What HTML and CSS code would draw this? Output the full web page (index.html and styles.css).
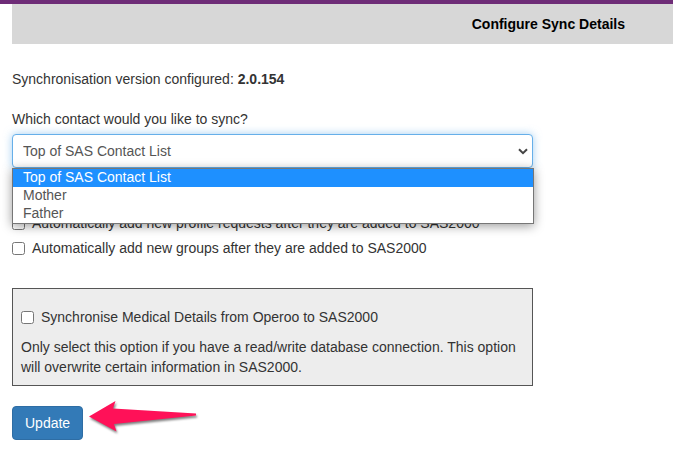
FILE: index.html
```
<!DOCTYPE html>
<html lang="en">
<head>
<meta charset="utf-8">
<meta name="viewport" content="width=device-width, initial-scale=1">
<title>Configure Sync Details</title>
<link rel="stylesheet" href="styles.css">
</head>
<body>
<main class="page">
  <h1 class="title">Configure Sync Details</h1>
  <form class="form">
    <p class="version">Synchronisation version configured: <strong>2.0.154</strong></p>
    <label class="field-label" for="contact">Which contact would you like to sync?</label>
    <div class="picker">
      <select class="select" id="contact">
        <option selected>Top of SAS Contact List</option>
        <option>Mother</option>
        <option>Father</option>
      </select>
      <svg class="chevron" viewBox="0 0 10 7" aria-hidden="true"><path d="M1 1.2 L5 5.2 L9 1.2"/></svg>
      <ul class="menu" role="listbox" aria-label="Contact">
        <li class="item item-active" role="option" aria-selected="true">Top of SAS Contact List</li>
        <li class="item" role="option">Mother</li>
        <li class="item" role="option">Father</li>
      </ul>
    </div>
    <div class="checks">
      <label class="check"><input class="box" type="checkbox">Automatically add new profile requests after they are added to SAS2000</label>
      <label class="check"><input class="box" type="checkbox">Automatically add new groups after they are added to SAS2000</label>
    </div>
    <section class="panel">
      <label class="check"><input class="box" type="checkbox">Synchronise Medical Details from Operoo to SAS2000</label>
      <p class="note">Only select this option if you have a read/write database connection. This option will overwrite certain information in SAS2000.</p>
    </section>
    <div class="actions">
      <button class="button" type="button">Update</button>
      <svg class="arrow" viewBox="0 0 112 36" aria-hidden="true"><path d="M1 15.5 L27.5 0 L25 7.5 L108 12.5 L108 14.5 L26 23 L28.5 30.5 Z"/></svg>
    </div>
  </form>
</main>
</body>
</html>
```
FILE: styles.css
```
* {
  box-sizing: border-box;
}

body {
  margin: 0;
  border-top: 4px solid #6e2c77;
  background: #fff;
  color: #333;
  font: 14px/20px "Liberation Sans", Arial, sans-serif;
}

.page {
  padding-left: 12px;
}

.title {
  margin: 0;
  padding: 10px 48px 10px 0;
  background: #d7d7d7;
  color: #000;
  font-size: 14px;
  line-height: 20px;
  text-align: right;
}

.form {
  max-width: 521px;
  padding-top: 25px;
}

.version {
  margin: 0 0 20px;
}

.field-label {
  display: block;
  margin-bottom: 5px;
}

.picker {
  position: relative;
}

.select {
  display: block;
  width: 100%;
  height: 34px;
  padding: 6px 10px;
  appearance: none;
  border: 1px solid #66afe9;
  border-radius: 4px;
  outline: 0;
  background: #fff;
  box-shadow: 0 0 8px rgba(102, 175, 233, 0.6);
  color: #555;
  font: inherit;
}

.chevron {
  position: absolute;
  top: 14px;
  right: 5px;
  width: 10px;
  height: 7px;
  fill: none;
  stroke: #444;
  stroke-width: 2;
}

.menu {
  position: absolute;
  top: 100%;
  left: 0;
  right: -1px;
  z-index: 1;
  margin: 0;
  padding: 0;
  border: 1px solid #767676;
  background: #fff;
  box-shadow: 0 2px 10px rgba(0, 0, 0, 0.4);
  color: #555;
  line-height: 16px;
  list-style: none;
}

.item {
  padding: 0 10px 2px;
}

.item-active {
  background: #1e90ff;
  color: #fff;
}

.checks {
  display: grid;
  gap: 5px;
  margin: 45px 0 30px;
}

.check {
  display: flex;
  align-items: center;
  gap: 7px;
}

.box {
  flex: none;
  width: 13px;
  height: 13px;
  margin: 0;
}

.panel {
  padding: 18px 8px 8px;
  border: 1px solid #555;
  background: #ededed;
}

.note {
  margin: 10px 0 0;
}

.actions {
  display: flex;
  align-items: flex-start;
  gap: 5px;
  margin-top: 20px;
}

.button {
  padding: 6px 12px;
  border: 1px solid #2e6da4;
  border-radius: 4px;
  background: #337ab7;
  color: #fff;
  font: inherit;
}

.arrow {
  width: 112px;
  height: 36px;
  margin-top: -5px;
  overflow: visible;
  fill: #ff1158;
  filter: drop-shadow(1px 2px 1px rgba(0, 0, 0, 0.5));
}
```
